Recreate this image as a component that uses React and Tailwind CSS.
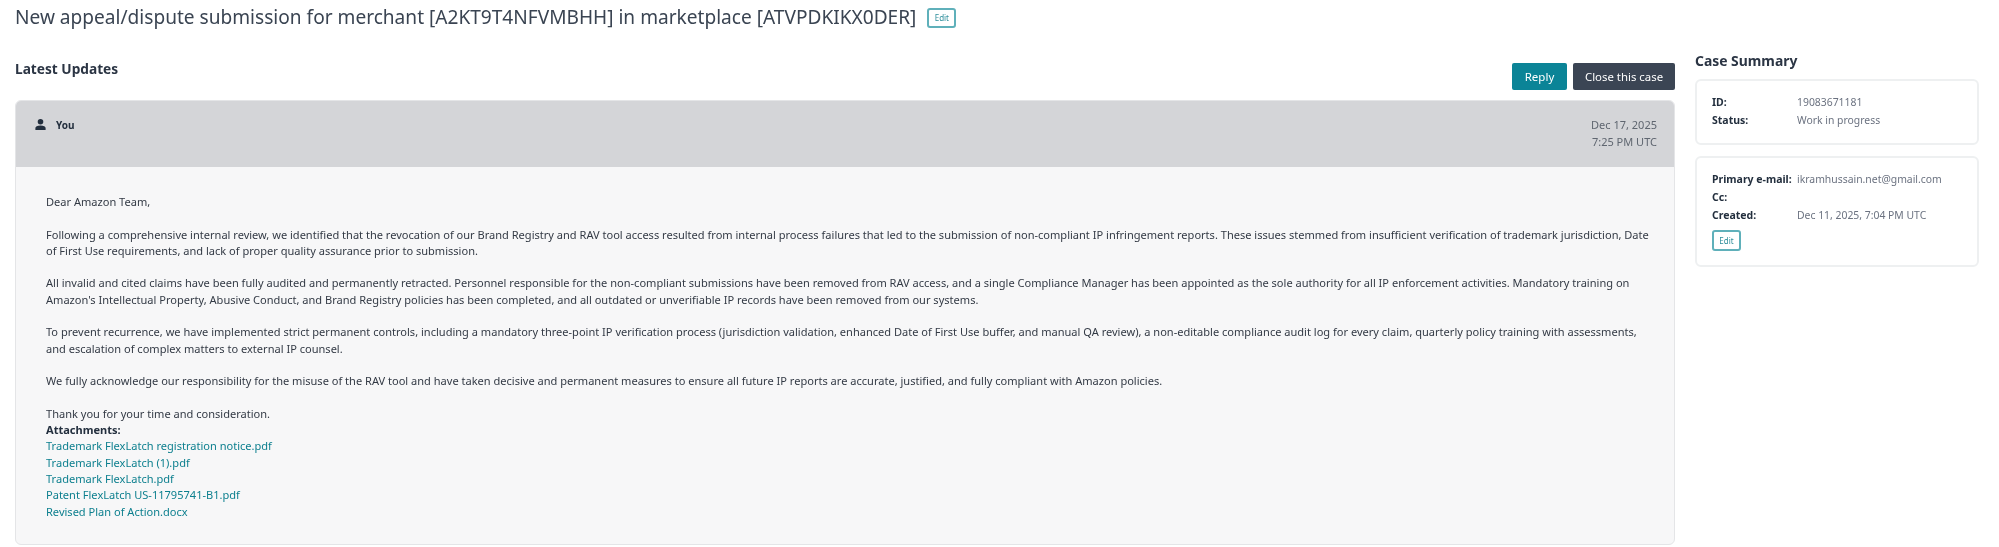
import React from 'react';

const attachments = [
  'Trademark FlexLatch registration notice.pdf',
  'Trademark FlexLatch (1).pdf',
  'Trademark FlexLatch.pdf',
  'Patent FlexLatch US-11795741-B1.pdf',
  'Revised Plan of Action.docx',
];

const UserIcon = () => (
  <svg viewBox="0 0 14 14" className="w-[13px] h-[13px] text-[#232f3e]" fill="currentColor">
    <circle cx="7" cy="4" r="3" />
    <path d="M1.500 13v-2.200C1.500 9 3.500 8 7 8s5.500 1 5.500 2.800V13z" />
  </svg>
);

const EditButton = ({ className = '' }) => (
  <button className={`border-2 border-[#5fb0ba] rounded-[3px] bg-white text-[#2f8f9c] text-[8px] leading-none flex items-center justify-center ${className}`}>
    Edit
  </button>
);

const SummaryRow = ({ label, value }) => (
  <div className="flex h-[18px] items-center">
    <div className="w-[85px] font-bold text-[#232f3e] text-[10.5px]">{label}</div>
    <div className="text-[#6b7280] text-[10.4px]">{value}</div>
  </div>
);

export default function App() {
  return (
    <div className="w-[1999px] h-[547px] overflow-hidden bg-white blur-[0.5px] font-['Noto_Sans',sans-serif]">
      {/* Title */}
      <div className="flex items-center h-[50px] pl-[15px] pb-[14px] gap-[11px]">
        <h1 className="text-[19.1px] text-[#3a4452] leading-none">
          New appeal/dispute submission for merchant [A2KT9T4NFVMBHH] in marketplace [ATVPDKIKX0DER]
        </h1>
        <EditButton className="w-[29px] h-[20px]" />
      </div>

      <div className="flex pl-[15px] gap-[20px]">
        {/* Left column */}
        <div className="w-[1660px]">
          <div className="flex justify-between h-[50px]">
            <div className="pt-[9px] text-[13.7px] leading-[20px] font-bold text-[#2b3544]">Latest Updates</div>
            <div className="flex gap-[6px] pt-[13px] h-[40px]">
              <button className="w-[55px] h-[27px] bg-[#0b8497] text-white text-[11.5px] rounded-[2px]">Reply</button>
              <button className="w-[102px] h-[27px] bg-[#3b4554] text-white text-[11.4px] rounded-[2px]">Close this case</button>
            </div>
          </div>

          <div className="h-[445px] rounded-[6px] border border-[#e4e5e7] overflow-hidden bg-[#f7f7f8]">
            <div className="h-[66px] bg-[#d4d5d8] flex justify-between pl-[18px] pr-[17px] pt-[16px]">
              <div className="flex items-start gap-[9px] pt-[1px]">
                <UserIcon />
                <span className="text-[10px] leading-[14px] font-bold text-[#232f3e]">You</span>
              </div>
              <div className="text-right text-[11px] leading-[16.5px] text-[#5f6670]">
                Dec 17, 2025<br />7:25 PM UTC
              </div>
            </div>
            <div className="pl-[30px] pt-[27px] text-[11.05px] leading-[16.3px] text-[#333a45] whitespace-nowrap">
              <p>Dear Amazon Team,</p>
              <p className="mt-[16.3px]">
                Following a comprehensive internal review, we identified that the revocation of our Brand Registry and RAV tool access resulted from internal process failures that led to the submission of non-compliant IP infringement reports. These issues stemmed from insufficient verification of trademark jurisdiction, Date<br />
                of First Use requirements, and lack of proper quality assurance prior to submission.
              </p>
              <p className="mt-[16.3px]">
                All invalid and cited claims have been fully audited and permanently retracted. Personnel responsible for the non-compliant submissions have been removed from RAV access, and a single Compliance Manager has been appointed as the sole authority for all IP enforcement activities. Mandatory training on<br />
                Amazon's Intellectual Property, Abusive Conduct, and Brand Registry policies has been completed, and all outdated or unverifiable IP records have been removed from our systems.
              </p>
              <p className="mt-[16.3px]">
                To prevent recurrence, we have implemented strict permanent controls, including a mandatory three-point IP verification process (jurisdiction validation, enhanced Date of First Use buffer, and manual QA review), a non-editable compliance audit log for every claim, quarterly policy training with assessments,<br />
                and escalation of complex matters to external IP counsel.
              </p>
              <p className="mt-[16.3px]">
                We fully acknowledge our responsibility for the misuse of the RAV tool and have taken decisive and permanent measures to ensure all future IP reports are accurate, justified, and fully compliant with Amazon policies.
              </p>
              <p className="mt-[16.3px]">Thank you for your time and consideration.</p>
              <p className="font-bold text-[#232f3e]">Attachments:</p>
              {attachments.map((name) => (
                <a key={name} className="block text-[#0c7f8e]">{name}</a>
              ))}
            </div>
          </div>
        </div>

        {/* Case summary */}
        <div className="w-[284px]">
          <div className="text-[13.9px] leading-[22px] font-bold text-[#2b3544] mb-[7px]">Case Summary</div>
          <div className="border-2 border-[#eef0f1] rounded-[6px] h-[66px] pl-[15px] pt-[13px]">
            <SummaryRow label="ID:" value="19083671181" />
            <SummaryRow label="Status:" value="Work in progress" />
          </div>
          <div className="border-2 border-[#eef0f1] rounded-[6px] h-[111px] mt-[11px] pl-[15px] pt-[13px]">
            <SummaryRow label="Primary e-mail:" value="ikramhussain.net@gmail.com" />
            <SummaryRow label="Cc:" value="" />
            <SummaryRow label="Created:" value="Dec 11, 2025, 7:04 PM UTC" />
            <EditButton className="w-[29px] h-[21px] mt-[5px]" />
          </div>
        </div>
      </div>
    </div>
  );
}
